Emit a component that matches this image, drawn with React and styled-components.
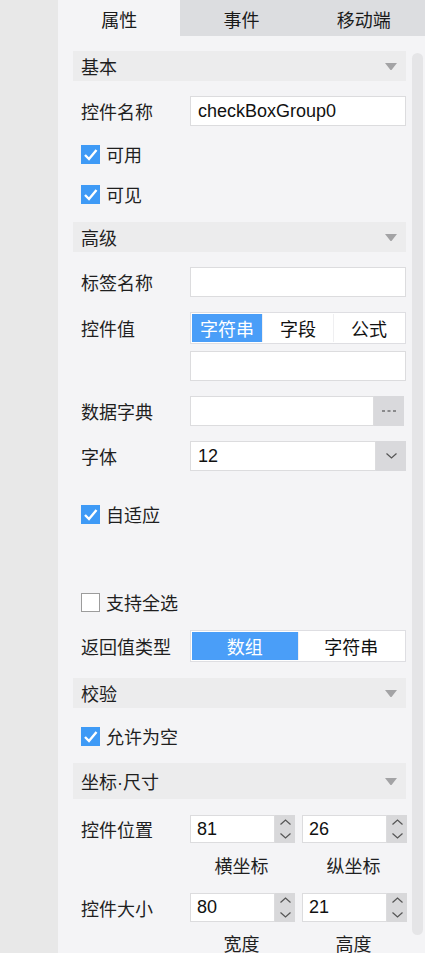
import React from "react";
import styled, { createGlobalStyle } from "styled-components";

const Global = createGlobalStyle`
  html, body { margin: 0; padding: 0; }
  body {
    font-family: "Liberation Sans", "Noto Sans CJK SC", sans-serif;
    color: #1f1f1f;
    background: #e8e8e8;
  }
  #root { width: 425px; height: 953px; overflow: hidden; }
`;

const Page = styled.div`
  display: flex;
  width: 425px;
  height: 953px;
  overflow: hidden;
`;

const LeftStrip = styled.div`
  width: 58px;
  flex: none;
  background: #e8e8e8;
`;

const Panel = styled.div`
  flex: 1;
  display: flex;
  flex-direction: column;
  background: #f4f4f6;
  min-width: 0;
`;

const Tabs = styled.div`
  display: flex;
  height: 36px;
  flex: none;
  background: #dcdde0;
`;

const Tab = styled.div`
  flex: 1;
  display: flex;
  align-items: center;
  justify-content: center;
  font-size: 18px;
  padding-top: 2px;
  box-sizing: border-box;
  color: #1a1a1a;
  background: ${(p) => (p.$active ? "#f4f4f6" : "transparent")};
`;

const Body = styled.div`
  flex: 1;
  display: flex;
  min-height: 0;
`;

const Content = styled.div`
  width: 333px;
  flex: none;
  padding: 15px 0 0 15px;
  display: flex;
  flex-direction: column;
`;

const ScrollTrack = styled.div`
  width: 11px;
  margin: 17px 2px 0 6px;
  height: 882px;
  border-radius: 6px;
  background: #e5e5e7;
  flex: none;
`;

const Header = styled.div`
  display: flex;
  align-items: center;
  justify-content: space-between;
  height: ${(p) => p.$h || 30}px;
  margin-top: ${(p) => p.$mt || 0}px;
  padding: 0 9px 0 8px;
  background: #ececed;
  font-size: 18px;
  flex: none;
`;

const Row = styled.div`
  display: flex;
  align-items: center;
  height: ${(p) => p.$h || 30}px;
  margin-top: ${(p) => p.$mt || 0}px;
  padding-left: 8px;
  flex: none;
`;

const Label = styled.div`
  width: 109px;
  flex: none;
  font-size: 18px;
  white-space: nowrap;
`;

const Spacer = styled.div`
  width: 109px;
  flex: none;
`;

const Field = styled.div`
  flex: 1;
  height: 100%;
  display: flex;
  min-width: 0;
`;

const TextBox = styled.div`
  flex: 1;
  height: 100%;
  box-sizing: border-box;
  border: 1px solid #dcdcde;
  background: #fff;
  display: flex;
  align-items: center;
  padding-left: ${(p) => p.$pl || 6}px;
  font-size: 18px;
  color: #111;
  min-width: 0;
`;

const SideButton = styled.div`
  width: ${(p) => p.$w || 30}px;
  margin-right: ${(p) => p.$mr || 0}px;
  flex: none;
  height: 100%;
  background: #d9d9dc;
  display: flex;
  align-items: center;
  justify-content: center;
`;

const Segmented = styled.div`
  flex: 1;
  height: 100%;
  box-sizing: border-box;
  border: 1px solid #dedee2;
  background: #fff;
  display: flex;
  padding: 1px 1px 1px 1px;
`;

const Segment = styled.div`
  flex: 1;
  display: flex;
  align-items: center;
  justify-content: center;
  font-size: 18px;
  color: ${(p) => (p.$active ? "#fff" : "#111")};
  background: ${(p) => (p.$active ? "#4a9ef8" : "#fff")};
  & + & {
    border-left: 1px solid ${(p) => (p.$active ? "#4a9ef8" : "#efeff1")};
  }
`;

const CheckRow = styled.div`
  display: flex;
  align-items: center;
  height: 40px;
  margin-top: ${(p) => p.$mt || 0}px;
  padding-left: 8px;
  gap: 6px;
  font-size: 18px;
  flex: none;
`;

const Box = styled.div`
  width: 19px;
  height: 19px;
  box-sizing: border-box;
  flex: none;
  background: ${(p) => (p.$checked ? "#3e9af6" : "#fff")};
  border: ${(p) => (p.$checked ? "none" : "1px solid #9c9c9c")};
  display: flex;
  align-items: center;
  justify-content: center;
`;

const SpinGroup = styled.div`
  display: flex;
  width: 105px;
  height: 100%;
  flex: none;
  margin-right: ${(p) => p.$mr || 0}px;
`;

const Spinner = styled.div`
  width: 20px;
  flex: none;
  height: 100%;
  background: #d8d8da;
  display: flex;
  flex-direction: column;
  align-items: center;
  justify-content: space-around;
`;

const CaptionRow = styled.div`
  display: flex;
  height: 24px;
  margin-top: ${(p) => p.$mt || 0}px;
  padding-left: 116px;
  flex: none;
`;

const Caption = styled.div`
  width: 105px;
  margin-right: ${(p) => p.$mr || 0}px;
  text-align: center;
  font-size: 18px;
  line-height: 24px;
  flex: none;
`;

const Arrow = () => (
  <svg width="12" height="7" viewBox="0 0 12 7">
    <polygon points="0,0 12,0 6.5,7 5.5,7" fill="#a3a3a5" />
  </svg>
);

const Check = () => (
  <svg width="19" height="19" viewBox="0 0 19 19">
    <path d="M4 10 L8 14 L15.5 5" stroke="#fff" strokeWidth="2.4" fill="none" />
  </svg>
);

const ChevronDown = ({ color = "#555" }) => (
  <svg width="11" height="6" viewBox="0 0 11 6">
    <path d="M0.5 0.5 L5.5 5 L10.5 0.5" stroke={color} strokeWidth="1.2" fill="none" />
  </svg>
);

const ChevronUp = ({ color = "#555" }) => (
  <svg width="11" height="6" viewBox="0 0 11 6">
    <path d="M0.5 5.5 L5.5 1 L10.5 5.5" stroke={color} strokeWidth="1.2" fill="none" />
  </svg>
);

const Dots = () => (
  <svg width="14" height="3" viewBox="0 0 14 3">
    <rect x="0" y="0" width="3" height="2" fill="#8a8a8c" />
    <rect x="5.5" y="0" width="3" height="2" fill="#8a8a8c" />
    <rect x="11" y="0" width="3" height="2" fill="#8a8a8c" />
  </svg>
);

const Section = ({ title, mt, h }) => (
  <Header $mt={mt} $h={h}>
    <span>{title}</span>
    <Arrow />
  </Header>
);

const CheckItem = ({ checked, label, mt }) => (
  <CheckRow $mt={mt}>
    <Box $checked={checked}>{checked && <Check />}</Box>
    <span>{label}</span>
  </CheckRow>
);

const Spin = ({ value, mr }) => (
  <SpinGroup $mr={mr}>
    <TextBox $pl={6}>{value}</TextBox>
    <Spinner>
      <ChevronUp />
      <ChevronDown />
    </Spinner>
  </SpinGroup>
);

export default function App() {
  return (
    <>
      <Global />
      <Page>
        <LeftStrip />
        <Panel>
          <Tabs>
            <Tab $active>属性</Tab>
            <Tab>事件</Tab>
            <Tab>移动端</Tab>
          </Tabs>
          <Body>
            <Content>
              <Section title="基本" />
              <Row $mt={15}>
                <Label>控件名称</Label>
                <Field>
                  <TextBox $pl={7}>checkBoxGroup0</TextBox>
                </Field>
              </Row>
              <CheckItem checked label="可用" mt={8} />
              <CheckItem checked label="可见" />
              <Section title="高级" mt={8} />
              <Row $mt={15}>
                <Label>标签名称</Label>
                <Field>
                  <TextBox />
                </Field>
              </Row>
              <Row $mt={15} $h={32}>
                <Label>控件值</Label>
                <Field>
                  <Segmented>
                    <Segment $active>字符串</Segment>
                    <Segment>字段</Segment>
                    <Segment>公式</Segment>
                  </Segmented>
                </Field>
              </Row>
              <Row $mt={7}>
                <Spacer />
                <Field>
                  <TextBox />
                </Field>
              </Row>
              <Row $mt={15}>
                <Label>数据字典</Label>
                <Field>
                  <TextBox />
                  <SideButton $mr={2}>
                    <Dots />
                  </SideButton>
                </Field>
              </Row>
              <Row $mt={15}>
                <Label>字体</Label>
                <Field>
                  <TextBox $pl={7}>12</TextBox>
                  <SideButton>
                    <ChevronDown />
                  </SideButton>
                </Field>
              </Row>
              <CheckItem checked label="自适应" mt={23} />
              <CheckItem label="支持全选" mt={48} />
              <Row $mt={8} $h={32}>
                <Label>返回值类型</Label>
                <Field>
                  <Segmented>
                    <Segment $active>数组</Segment>
                    <Segment>字符串</Segment>
                  </Segmented>
                </Field>
              </Row>
              <Section title="校验" mt={16} />
              <CheckItem checked label="允许为空" mt={8} />
              <Section title="坐标·尺寸" mt={7} h={36} />
              <Row $mt={16} $h={28}>
                <Label>控件位置</Label>
                <Spin value="81" mr={7} />
                <Spin value="26" />
              </Row>
              <CaptionRow $mt={12}>
                <Caption $mr={7}>横坐标</Caption>
                <Caption>纵坐标</Caption>
              </CaptionRow>
              <Row $mt={14} $h={29}>
                <Label>控件大小</Label>
                <Spin value="80" mr={7} />
                <Spin value="21" />
              </Row>
              <CaptionRow $mt={11}>
                <Caption $mr={7}>宽度</Caption>
                <Caption>高度</Caption>
              </CaptionRow>
            </Content>
            <ScrollTrack />
          </Body>
        </Panel>
      </Page>
    </>
  );
}
